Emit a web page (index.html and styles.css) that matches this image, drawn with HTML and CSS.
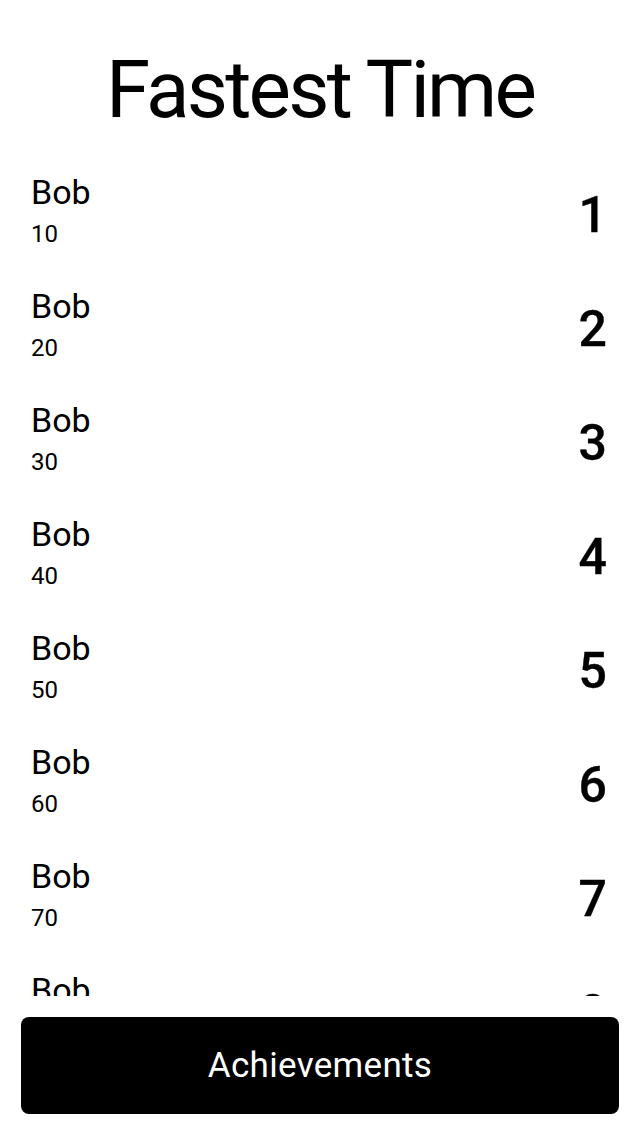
FILE: index.html
```html
<!DOCTYPE html>
<html>
<head>
<meta charset="utf-8">
<link rel="stylesheet" href="styles.css">
</head>
<body>
<div class="screen">
  <h1 class="title">Fastest Time</h1>
  <div class="list">
    <div class="row"><div class="info"><div class="name">Bob</div><div class="score">10</div></div><div class="rank">1</div></div>
    <div class="row"><div class="info"><div class="name">Bob</div><div class="score">20</div></div><div class="rank">2</div></div>
    <div class="row"><div class="info"><div class="name">Bob</div><div class="score">30</div></div><div class="rank">3</div></div>
    <div class="row"><div class="info"><div class="name">Bob</div><div class="score">40</div></div><div class="rank">4</div></div>
    <div class="row"><div class="info"><div class="name">Bob</div><div class="score">50</div></div><div class="rank">5</div></div>
    <div class="row"><div class="info"><div class="name">Bob</div><div class="score">60</div></div><div class="rank">6</div></div>
    <div class="row"><div class="info"><div class="name">Bob</div><div class="score">70</div></div><div class="rank">7</div></div>
    <div class="row"><div class="info"><div class="name">Bob</div><div class="score">80</div></div><div class="rank">8</div></div>
  </div>
  <button class="btn">Achievements</button>
</div>
</body>
</html>
```
FILE: styles.css
```css
html, body {
  margin: 0;
  padding: 0;
  background: #fff;
}
.screen {
  width: 640px;
  height: 1136px;
  display: flex;
  flex-direction: column;
  font-family: Roboto, "Liberation Sans", sans-serif;
  color: #000;
}
.title {
  margin: 0;
  height: 172px;
  box-sizing: border-box;
  padding-top: 40px;
  font-size: 80px;
  line-height: 100px;
  font-weight: 400;
  letter-spacing: -2.8px;
  text-align: center;
}
.list {
  height: 824px;
  overflow: hidden;
}
.row {
  height: 114px;
  display: flex;
  justify-content: space-between;
  align-items: flex-start;
  padding: 0 33px 0 31px;
}
.name {
  font-size: 34px;
  line-height: 40px;
}
.score {
  font-size: 24px;
  line-height: 44px;
}
.rank {
  font-size: 50px;
  line-height: 50px;
  font-weight: 500;
  -webkit-text-stroke: 0.35px #000;
  margin-top: 18px;
}
.btn {
  margin: 21px 21px 0;
  height: 97px;
  background: #000;
  color: #fff;
  border: none;
  border-radius: 8px;
  font-family: Roboto, "Liberation Sans", sans-serif;
  font-size: 35px;
  letter-spacing: 0.3px;
}
```
